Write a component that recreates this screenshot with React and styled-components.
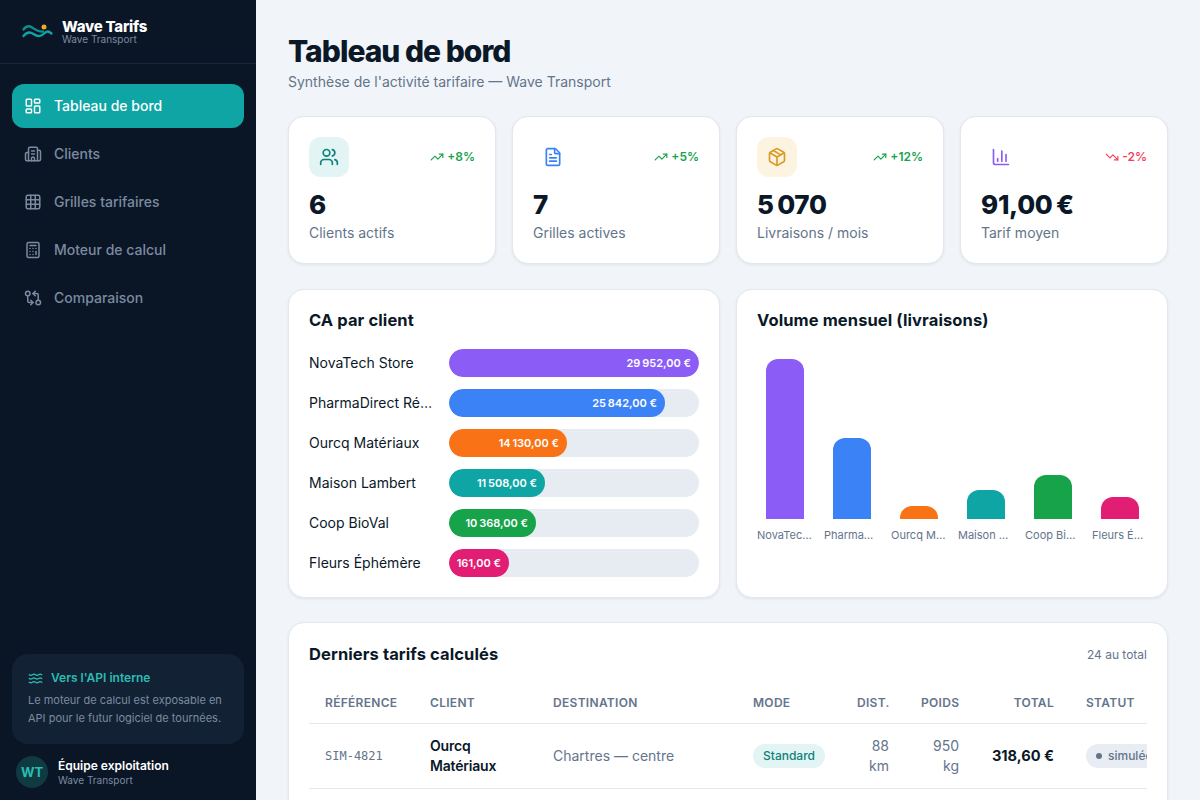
import React from "react";
import styled, { createGlobalStyle } from "styled-components";
import { LayoutDashboard, Building2, Grid3x3, Calculator, GitCompareArrows, Waves, Users, FileText, Package, ChartColumn, TrendingUp, TrendingDown } from "lucide-react";

const Global = createGlobalStyle`
  html, body { margin: 0; padding: 0; height: 100%; overflow: hidden; }
  body { font-family: Inter, "Liberation Sans", sans-serif; background: #f1f5f9; color: #0a1828; }
  * { box-sizing: border-box; }
`;
const Shell = styled.div`display: flex; width: 1200px; height: 800px; overflow: hidden;`;
const Side = styled.aside`width: 256px; flex: none; height: 800px; background: #0a1626; display: flex; flex-direction: column;`;
const Brand = styled.div`height: 64px; display: flex; align-items: center; gap: 10px; padding: 0 20px; border-bottom: 1px solid #16283b;`;
const BrandText = styled.div`display: flex; flex-direction: column;`;
const BrandName = styled.div`font-size: 15px; line-height: 15px; font-weight: 800; color: #fff; letter-spacing: -0.25px;`;
const BrandSub = styled.div`font-size: 10px; line-height: 11px; color: #7c8aa0;`;
const Nav = styled.nav`flex: 1; display: flex; flex-direction: column; gap: 4px; padding: 20px 12px;`;
const NavItem = styled.div`
  height: 44px; display: flex; align-items: center; gap: 12px; padding: 0 12px; border-radius: 12px;
  font-size: 14px; line-height: 20px; font-weight: 500; color: ${p => (p.$active ? "#fff" : "#7c8aa0")};
  background: ${p => (p.$active ? "#0ea5a4" : "transparent")};
`;
const Promo = styled.div`margin: 0 12px; height: 90px; border-radius: 16px; background: #122234; padding: 16px;`;
const PromoHead = styled.div`display: flex; align-items: center; gap: 8px; font-size: 12px; line-height: 16px; font-weight: 600; color: #2bbcb3;`;
const PromoText = styled.div`margin-top: 5px; font-size: 11px; line-height: 18px; color: #7c8aa0; white-space: nowrap;`;
const User = styled.div`display: flex; align-items: center; gap: 10px; padding: 12px 16px; height: 56px;`;
const Avatar = styled.div`width: 32px; height: 32px; border-radius: 50%; background: #0f3a42; color: #2bbcb3; display: flex; align-items: center; justify-content: center; font-size: 13px; font-weight: 700;`;
const UserInfo = styled.div`padding-top: 0;`;
const UserName = styled.div`font-size: 12px; line-height: 15px; font-weight: 600; color: #fff;`;
const UserSub = styled.div`font-size: 10px; line-height: 14px; color: #7c8aa0;`;

const Main = styled.main`flex: 1; min-width: 0; padding: 33px 32px 0;`;
const Title = styled.h1`margin: 0; font-size: 30px; line-height: 36px; font-weight: 800; letter-spacing: -1px; color: #0a1828;`;
const Subtitle = styled.p`margin: 3px 0 0; font-size: 14px; line-height: 20px; color: #64748b;`;
const Stats = styled.section`display: grid; grid-template-columns: repeat(4, minmax(0, 1fr)); gap: 16px; margin-top: 24px;`;
const Card = styled.div`background: #fff; border: 1px solid #e2e8f0; border-radius: 16px; box-shadow: 0 1px 3px rgba(15, 23, 42, 0.08);`;
const StatCard = styled(Card)`height: 148px; padding: 20px;`;
const StatTop = styled.div`display: flex; justify-content: space-between; align-items: center;`;
const IconBox = styled.div`width: 40px; height: 40px; border-radius: 12px; display: flex; align-items: center; justify-content: center; background: ${p => p.$bg}; color: ${p => p.$color};`;
const Trend = styled.div`display: flex; align-items: center; gap: 3px; font-size: 12px; line-height: 14px; font-weight: 600; color: ${p => p.$color};`;
const StatValue = styled.div`margin-top: 12px; font-size: 26px; line-height: 32px; font-weight: 800; letter-spacing: -0.3px; color: #0a1828;`;
const StatLabel = styled.div`margin-top: 2px; font-size: 14px; line-height: 20px; color: #64748b;`;
const Charts = styled.section`display: grid; grid-template-columns: repeat(2, minmax(0, 1fr)); gap: 16px; margin-top: 25px;`;
const ChartCard = styled(Card)`height: 309px; padding: 20px;`;
const CardTitle = styled.h2`margin: 0; font-size: 16.5px; line-height: 20px; font-weight: 700; letter-spacing: 0.1px; color: #0a1828;`;
const Bars = styled.div`margin-top: 19px; display: flex; flex-direction: column; gap: 12px;`;
const BarRow = styled.div`display: flex; align-items: center; gap: 16px;`;
const BarLabel = styled.div`width: 124px; flex: none; font-size: 14px; line-height: 20px; color: #0a1828; white-space: nowrap; overflow: hidden; text-overflow: ellipsis;`;
const Track = styled.div`flex: 1; height: 28px; border-radius: 14px; background: #e7ecf3; overflow: hidden;`;
const Fill = styled.div`height: 100%; border-radius: 14px; background: ${p => p.$color}; color: #fff; display: flex; align-items: center; justify-content: flex-end; padding-right: 8px; font-size: 11px; font-weight: 600; white-space: nowrap;`;
const Columns = styled.div`margin-top: 29px; height: 184px; display: flex; gap: 12px;`;
const Col = styled.div`flex: 1; min-width: 0; display: flex; flex-direction: column; justify-content: flex-end; align-items: center; gap: 8px;`;
const ColBar = styled.div`width: 38px; border-radius: 12px 12px 0 0; background: ${p => p.$color};`;
const ColLabel = styled.div`width: 100%; font-size: 11px; line-height: 16px; color: #64748b; white-space: nowrap; overflow: hidden; text-overflow: ellipsis;`;
const TableCard = styled(Card)`margin-top: 24px; padding: 21px 20px 20px; height: 300px;`;
const TableHead = styled.div`display: flex; justify-content: space-between; align-items: center;`;
const Count = styled.div`font-size: 12px; color: #64748b;`;
const Scroll = styled.div`margin-top: 19px; overflow: hidden;`;
const Table = styled.table`width: 871px; table-layout: fixed; border-collapse: collapse; font-size: 14px;`;
const Th = styled.th`padding: 12px 16px; border-bottom: 1px solid #e2e8f0; font-size: 12px; line-height: 16px; font-weight: 600; letter-spacing: 0.3px; color: #64748b; text-align: ${p => p.$right ? "right" : "left"}; white-space: nowrap;`;
const Td = styled.td`padding: 12px 16px; border-bottom: 1px solid #e2e8f0; line-height: 20px; color: #64748b; text-align: ${p => p.$right ? "right" : "left"};`;
const Ref = styled(Td)`font-family: "DejaVu Sans Mono", monospace; font-size: 12px;`;
const ClientCell = styled(Td)`font-weight: 600; letter-spacing: -0.2px; color: #0a1828;`;
const TotalCell = styled(Td)`font-size: 14.6px; font-weight: 700; color: #0a1828; white-space: nowrap;`;
const Badge = styled.span`display: inline-flex; align-items: center; padding: 0 10px; height: 24px; border-radius: 12px; background: #e2f4f3; color: #0f7f7c; font-size: 12px; font-weight: 500;`;
const Status = styled.span`display: inline-flex; align-items: center; gap: 6px; padding: 0 10px; height: 24px; border-radius: 12px; background: #e8ecf3; color: #64748b; font-size: 12px; font-weight: 500; white-space: nowrap;`;
const Dot = styled.i`width: 6px; height: 6px; border-radius: 50%; background: #64748b;`;

const LogoMark = () => (
  <svg width="32" height="32" viewBox="0 0 32 32" fill="none" stroke="#0ea5a4" strokeWidth="2.3" strokeLinecap="round" style={{ overflow: "visible" }}>
    <path d="M3.500 13.500C6 10 9 9.500 12 11.500S18 16 23 15.500" stroke="#0f8f90" />
    <path d="M3.500 20C7 15.500 10 15.500 13.500 18S20 21.500 23.500 18S28.500 15 31.500 17.500" />
    <circle cx="24" cy="11" r="2.500" fill="#f5a623" stroke="none" />
  </svg>
);

const stats = [
  { Icon: Users, bg: "#e2f4f3", color: "#0f7f7c", trend: "+8%", up: true, value: "6", label: "Clients actifs" },
  { Icon: FileText, bg: "#fff", color: "#3b82f6", trend: "+5%", up: true, value: "7", label: "Grilles actives" },
  { Icon: Package, bg: "#fdf3e1", color: "#d99a25", trend: "+12%", up: true, value: "5\u2009070", label: "Livraisons / mois" },
  { Icon: ChartColumn, bg: "#fff", color: "#8b5cf6", trend: "-2%", up: false, value: "91,00\u2009€", label: "Tarif moyen" },
];
const bars = [
  ["NovaTech Store", "29\u2009952,00 €", 250, "#8b5cf6"],
  ["PharmaDirect Réseau", "25\u2009842,00 €", 216, "#3b82f6"],
  ["Ourcq Matériaux", "14\u2009130,00 €", 118, "#f97316"],
  ["Maison Lambert", "11\u2009508,00 €", 96, "#0ea5a4"],
  ["Coop BioVal", "10\u2009368,00 €", 87, "#16a34a"],
  ["Fleurs Éphémère", "161,00 €", 60, "#e11d74"],
];
const cols = [
  ["NovaTech Store", 160, "#8b5cf6"],
  ["PharmaDirect Réseau", 81, "#3b82f6"],
  ["Ourcq Matériaux", 13, "#f97316"],
  ["Maison Lambert", 29, "#0ea5a4"],
  ["Coop BioVal", 44, "#16a34a"],
  ["Fleurs Éphémère", 22, "#e11d74"],
];
const colWidths = [105, 123, 200, 104, 64, 70, 95, 110];

export default function App() {
  return (
    <Shell>
      <Global />
      <Side>
        <Brand>
          <LogoMark />
          <BrandText>
            <BrandName>Wave Tarifs</BrandName>
            <BrandSub>Wave Transport</BrandSub>
          </BrandText>
        </Brand>
        <Nav>
          <NavItem $active><LayoutDashboard size={18} />Tableau de bord</NavItem>
          <NavItem><Building2 size={18} />Clients</NavItem>
          <NavItem><Grid3x3 size={18} />Grilles tarifaires</NavItem>
          <NavItem><Calculator size={18} />Moteur de calcul</NavItem>
          <NavItem><GitCompareArrows size={18} />Comparaison</NavItem>
        </Nav>
        <Promo>
          <PromoHead><Waves size={15} />Vers l'API interne</PromoHead>
          <PromoText>Le moteur de calcul est exposable en<br />API pour le futur logiciel de tournées.</PromoText>
        </Promo>
        <User>
          <Avatar>WT</Avatar>
          <UserInfo>
            <UserName>Équipe exploitation</UserName>
            <UserSub>Wave Transport</UserSub>
          </UserInfo>
        </User>
      </Side>
      <Main>
        <Title>Tableau de bord</Title>
        <Subtitle>Synthèse de l'activité tarifaire — Wave Transport</Subtitle>
        <Stats>
          {stats.map(s => (
            <StatCard key={s.label}>
              <StatTop>
                <IconBox $bg={s.bg} $color={s.color}><s.Icon size={20} /></IconBox>
                <Trend $color={s.up ? "#16a34a" : "#f43f5e"}>
                  {s.up ? <TrendingUp size={14} /> : <TrendingDown size={14} />}{s.trend}
                </Trend>
              </StatTop>
              <StatValue>{s.value}</StatValue>
              <StatLabel>{s.label}</StatLabel>
            </StatCard>
          ))}
        </Stats>
        <Charts>
          <ChartCard>
            <CardTitle>CA par client</CardTitle>
            <Bars>
              {bars.map(b => (
                <BarRow key={b[0]}>
                  <BarLabel>{b[0]}</BarLabel>
                  <Track><Fill $color={b[3]} style={{ width: b[2] }}>{b[1]}</Fill></Track>
                </BarRow>
              ))}
            </Bars>
          </ChartCard>
          <ChartCard>
            <CardTitle>Volume mensuel (livraisons)</CardTitle>
            <Columns>
              {cols.map(c => (
                <Col key={c[0]}>
                  <ColBar $color={c[2]} style={{ height: c[1] }} />
                  <ColLabel>{c[0]}</ColLabel>
                </Col>
              ))}
            </Columns>
          </ChartCard>
        </Charts>
        <TableCard>
          <TableHead>
            <CardTitle>Derniers tarifs calculés</CardTitle>
            <Count>24 au total</Count>
          </TableHead>
          <Scroll>
            <Table>
              <colgroup>
                {colWidths.map((w, i) => <col key={i} style={{ width: w }} />)}
              </colgroup>
              <thead>
                <tr>
                  <Th>RÉFÉRENCE</Th><Th>CLIENT</Th><Th>DESTINATION</Th><Th>MODE</Th>
                  <Th $right>DIST.</Th><Th $right>POIDS</Th><Th $right>TOTAL</Th><Th>STATUT</Th>
                </tr>
              </thead>
              <tbody>
                <tr>
                  <Ref>SIM-4821</Ref>
                  <ClientCell>Ourcq Matériaux</ClientCell>
                  <Td>Chartres — centre</Td>
                  <Td><Badge>Standard</Badge></Td>
                  <Td $right>88 km</Td>
                  <Td $right>950 kg</Td>
                  <TotalCell $right>318,60 €</TotalCell>
                  <Td><Status><Dot />simulée</Status></Td>
                </tr>
              </tbody>
            </Table>
          </Scroll>
        </TableCard>
      </Main>
    </Shell>
  );
}
